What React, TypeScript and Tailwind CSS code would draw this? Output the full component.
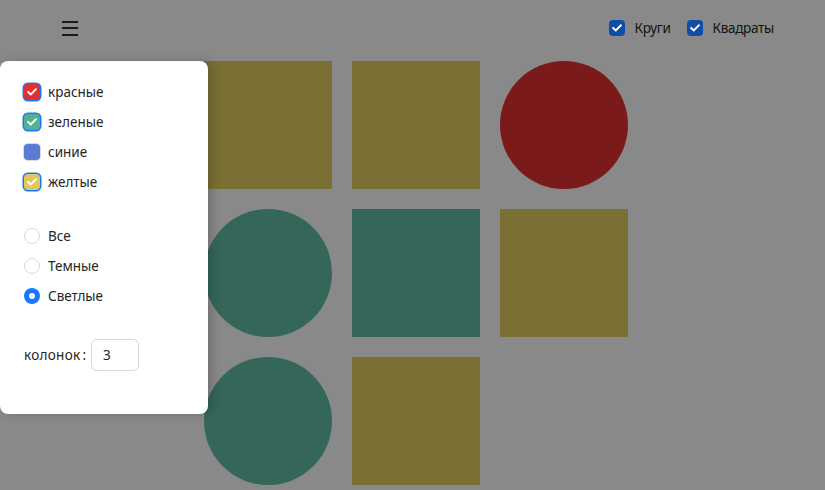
import React from "react";

const font = { fontFamily: '"Noto Sans", "Open Sans", sans-serif' };

function Check({ cls }: { cls: string }) {
  return (
    <span className={`flex h-4 w-4 shrink-0 items-center justify-center rounded-[4px] ${cls}`}>
      <svg width="10" height="8" viewBox="0 0 10 8" fill="none">
        <path d="M1.2 4 L3.8 6.4 L8.8 1.4" stroke="white" strokeWidth="1.9" strokeLinecap="square" />
      </svg>
    </span>
  );
}

type Shape = { kind: "sq" | "ci"; color: string };

const shapes: Shape[] = [
  { kind: "sq", color: "bg-[#7a7033]" },
  { kind: "sq", color: "bg-[#7a7033]" },
  { kind: "ci", color: "bg-[#7b1a1a]" },
  { kind: "ci", color: "bg-[#35665a]" },
  { kind: "sq", color: "bg-[#35665a]" },
  { kind: "sq", color: "bg-[#7a7033]" },
  { kind: "ci", color: "bg-[#35665a]" },
  { kind: "sq", color: "bg-[#7a7033]" },
];

export default function App() {
  return (
    <div className="relative h-[490px] w-[825px] overflow-hidden bg-[#898989] text-[13.5px]" style={font}>
      <header className="flex h-[56px] items-center justify-between pl-[62px] pr-[51px]">
        <div className="flex flex-col gap-[4.5px]">
          <span className="block h-[2px] w-[16px] bg-[#1a1a1a]" />
          <span className="block h-[2px] w-[16px] bg-[#1a1a1a]" />
          <span className="block h-[2px] w-[16px] bg-[#1a1a1a]" />
        </div>
        <div className="flex items-center gap-[16px] tracking-[-0.3px] text-[#141414]">
          <label className="flex items-center gap-[10px]">
            <Check cls="bg-[#0d4ea6]" />
            <span>Круги</span>
          </label>
          <label className="flex items-center gap-[10px]">
            <Check cls="bg-[#0d4ea6]" />
            <span>Квадраты</span>
          </label>
        </div>
      </header>
      <main className="grid w-fit grid-cols-[128px_128px_128px] gap-[20px] pl-[204px] pt-[5px]">
        {shapes.map((s, i) => (
          <div
            key={i}
            className={`h-[128px] w-[128px] ${s.color} ${s.kind === "ci" ? "rounded-full" : ""}`}
          />
        ))}
      </main>

      <aside className="absolute left-0 top-[61px] flex h-[353px] w-[208px] flex-col rounded-lg bg-white pl-[24px] pt-[16px] text-[#262626] shadow-[4px_0_10px_rgba(0,0,0,0.18)]">
        <div className="flex flex-col">
          {[
            { t: "красные", c: "bg-[#e03131] ring-[1.5px] ring-[#1677ff]", on: true },
            { t: "зеленые", c: "bg-[#55b08f] ring-[1.5px] ring-[#1677ff]", on: true },
            { t: "синие", c: "bg-[#5b7bd5] ring-1 ring-[#d9d9d9]", on: false },
            { t: "желтые", c: "bg-[#e2c85a] ring-[1.5px] ring-[#1677ff]", on: true },
          ].map((r) => (
            <label key={r.t} className="flex h-[30px] items-center gap-[8px]">
              {r.on ? (
                <Check cls={r.c} />
              ) : (
                <span className={`block h-4 w-4 rounded-[4px] ${r.c}`} />
              )}
              <span>{r.t}</span>
            </label>
          ))}
        </div>
        <div className="mt-[24px] flex flex-col">
          {["Все", "Темные", "Светлые"].map((t, i) => (
            <label key={t} className="flex h-[30px] items-center gap-[8px]">
              {i === 2 ? (
                <span className="flex h-4 w-4 items-center justify-center rounded-full bg-[#1677ff]">
                  <span className="block h-[6px] w-[6px] rounded-full bg-white" />
                </span>
              ) : (
                <span className="block h-4 w-4 rounded-full border border-[#d9d9d9] bg-white" />
              )}
              <span>{t}</span>
            </label>
          ))}
        </div>
        <div className="mt-[28px] flex items-center">
          <span className="tracking-[0.3px]">колонок</span>
          <span className="ml-[2px] mr-[5px]">:</span>
          <div className="flex h-[32px] w-[48px] items-center rounded-md border border-[#d9d9d9] pl-[11px]">
            3
          </div>
        </div>
      </aside>
    </div>
  );
}
